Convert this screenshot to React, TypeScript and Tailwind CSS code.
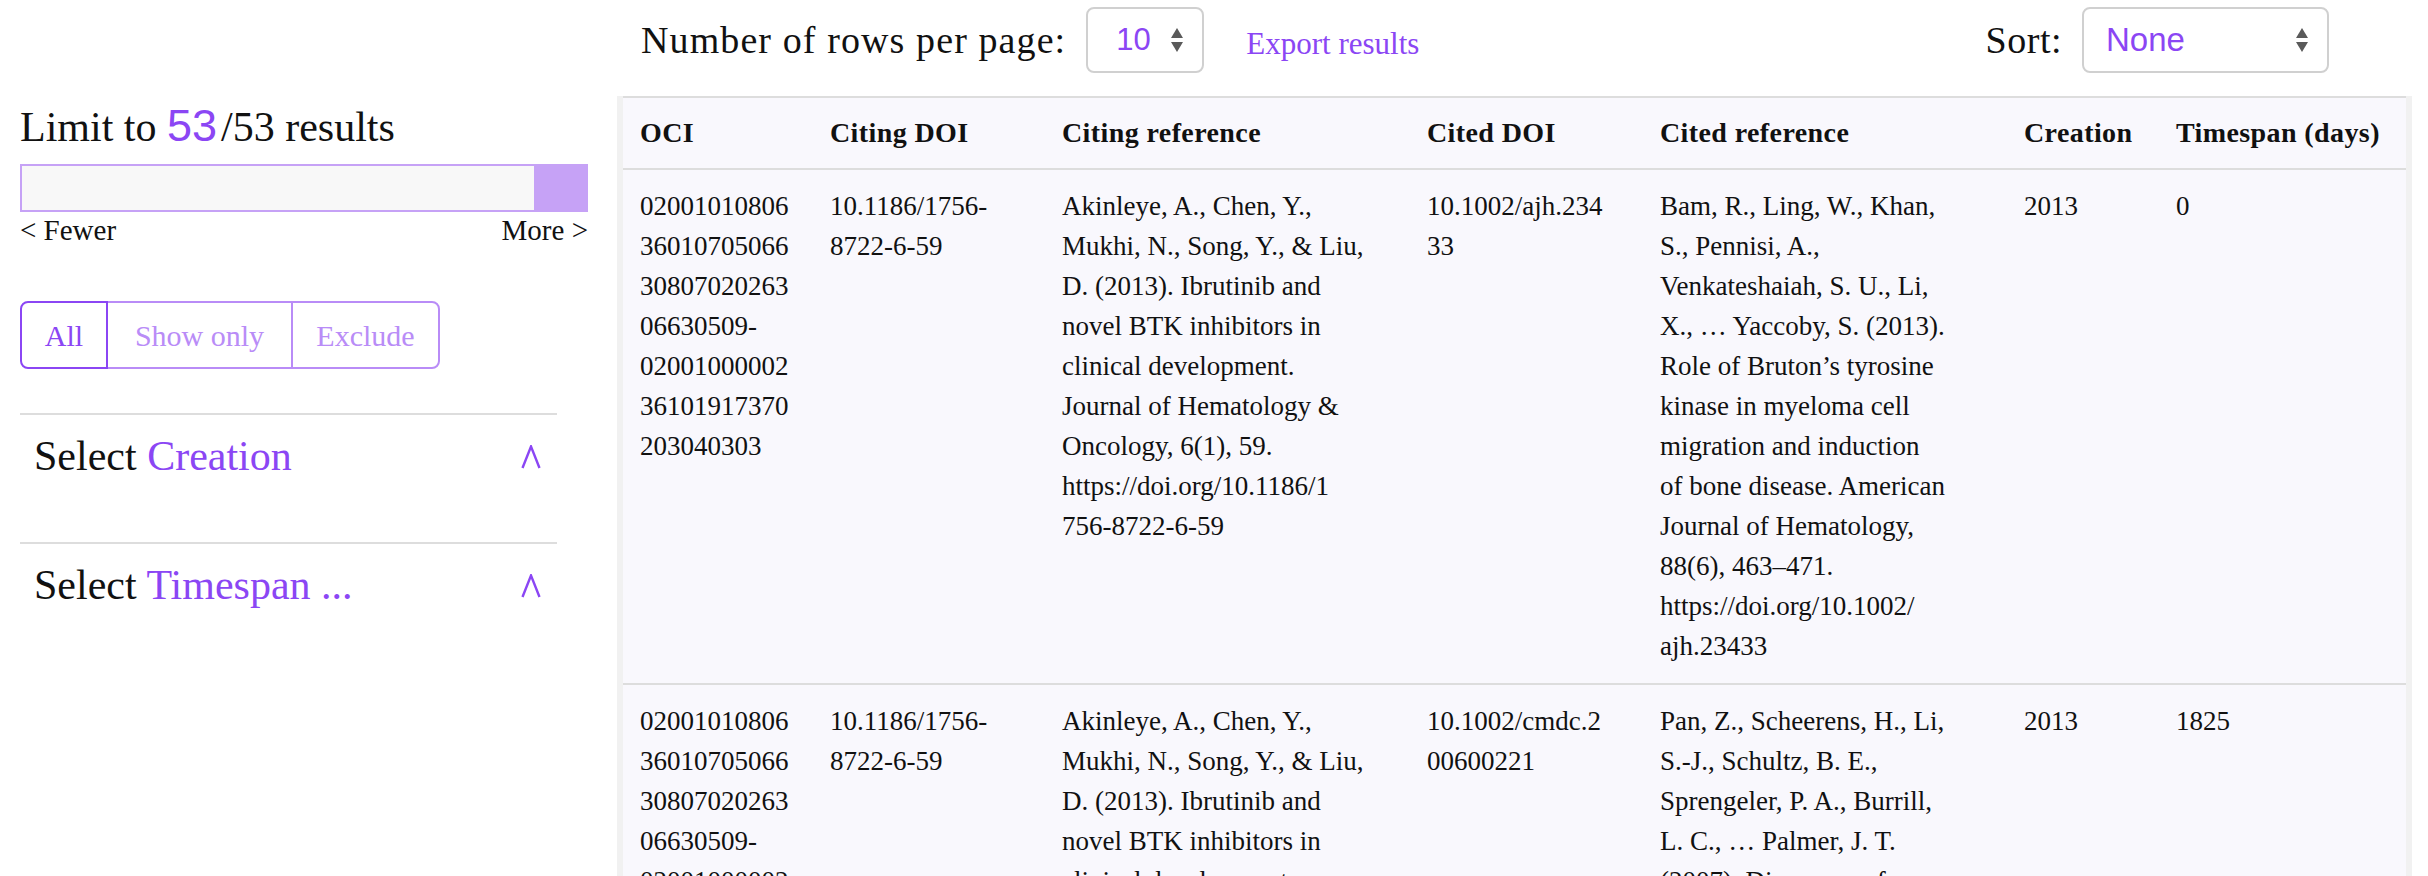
import { useState } from 'react';

const serif = "font-['Liberation_Serif',serif]";

type Row = {
  oci: string[];
  citingDoi: string[];
  citingRef: string[];
  citedDoi: string[];
  citedRef: string[];
  creation: string;
  timespan: string;
};

const ociLines = ['02001010806', '36010705066', '30807020263', '06630509-', '02001000002', '36101917370', '203040303'];
const citingRef = [
  'Akinleye, A., Chen, Y.,',
  'Mukhi, N., Song, Y., & Liu,',
  'D. (2013). Ibrutinib and',
  'novel BTK inhibitors in',
  'clinical development.',
  'Journal of Hematology &',
  'Oncology, 6(1), 59.',
  'https://doi.org/10.1186/1',
  '756-8722-6-59',
];

const rows: Row[] = [
  {
    oci: ociLines,
    citingDoi: ['10.1186/1756-', '8722-6-59'],
    citingRef,
    citedDoi: ['10.1002/ajh.234', '33'],
    citedRef: [
      'Bam, R., Ling, W., Khan,',
      'S., Pennisi, A.,',
      'Venkateshaiah, S. U., Li,',
      'X., … Yaccoby, S. (2013).',
      'Role of Bruton’s tyrosine',
      'kinase in myeloma cell',
      'migration and induction',
      'of bone disease. American',
      'Journal of Hematology,',
      '88(6), 463–471.',
      'https://doi.org/10.1002/',
      'ajh.23433',
    ],
    creation: '2013',
    timespan: '0',
  },
  {
    oci: ociLines,
    citingDoi: ['10.1186/1756-', '8722-6-59'],
    citingRef,
    citedDoi: ['10.1002/cmdc.2', '00600221'],
    citedRef: [
      'Pan, Z., Scheerens, H., Li,',
      'S.-J., Schultz, B. E.,',
      'Sprengeler, P. A., Burrill,',
      'L. C., … Palmer, J. T.',
      '(2007). Discovery of',
      'selective irreversible',
      'inhibitors for Bruton’s',
      'tyrosine kinase.',
      'ChemMedChem, 2(1),',
      '58–61.',
    ],
    creation: '2013',
    timespan: '1825',
  },
];

const cols = 'grid grid-cols-[190px_232px_365px_233px_364px_152px_247px]';

function Lines({ lines }: { lines: string[] }) {
  return (
    <div>
      {lines.map((l, i) => (
        <div key={i} className="whitespace-nowrap">{l}</div>
      ))}
    </div>
  );
}

function Arrows() {
  return (
    <svg width="14" height="28" viewBox="0 0 14 28" className="text-[#5a5a5a]">
      <path d="M7 2 L13 12 L1 12 Z" fill="currentColor" />
      <path d="M1 16 L13 16 L7 26 Z" fill="currentColor" />
    </svg>
  );
}

function Caret() {
  return (
    <svg width="20" height="24" viewBox="0 0 20 24" className="mt-[13px] text-[#8b46f4]">
      <path d="M1.5 23 L10 1.5 L18.5 23" fill="none" stroke="currentColor" strokeWidth="2.4" />
    </svg>
  );
}

function Section({ value }: { value: string }) {
  return (
    <div className="border-t-2 border-[#dddddd] w-[537px] h-[129px] pt-[17px] pl-[14px] pr-[16px] flex items-start justify-between">
      <div className="text-[42px] leading-[48px] text-[#111] whitespace-nowrap">
        Select <span className="text-[#8b46f4]">{value}</span>
      </div>
      <Caret />
    </div>
  );
}

export default function App() {
  const [mode, setMode] = useState('All');
  const modes = ['All', 'Show only', 'Exclude'];
  return (
    <div className={`${serif} h-[876px] w-[2428px] overflow-hidden bg-white text-[#111] flex items-start`}>
      {/* sidebar */}
      <aside className="w-[617px] shrink-0 pl-5 pt-[100px]">
        <div className="text-[42px] leading-[52px] whitespace-nowrap">
          Limit to{' '}
          <span className="font-['Liberation_Sans',sans-serif] text-[45px] text-[#8b46f4]">53</span>
          <span className="ml-1">/53 results</span>
        </div>
        <div className="mt-[11px] w-[568px] h-[48px] border-2 border-[#c6a2f6] bg-[#f8f8f8] flex justify-end">
          <div className="w-[52px] bg-[#c6a2f6]" />
        </div>
        <div className="w-[568px] flex justify-between text-[29px] leading-[36px]">
          <span>&lt; Fewer</span>
          <span>More &gt;</span>
        </div>
        <div className="mt-[53px] flex w-[420px] h-[68px] text-[30px]">
          {modes.map((m, i) => (
            <button
              key={m}
              onClick={() => setMode(m)}
              className={
                'flex items-center justify-center ' +
                (i === 0
                  ? 'w-[88px] rounded-l-lg border-2 border-[#8b46f4] text-[#8b46f4]'
                  : i === 1
                    ? 'w-[183px] border-y-2 border-[#b98cf7] text-[#b98cf7]'
                    : 'w-[149px] rounded-r-lg border-2 border-[#b98cf7] text-[#b98cf7]')
              }
            >
              {m}
            </button>
          ))}
        </div>
        <div className="mt-[44px]">
          <Section value="Creation" />
          <Section value="Timespan ..." />
        </div>
      </aside>

      {/* main */}
      <main className="w-[1795px] shrink-0 flex flex-col">
        <div className="shrink-0 pt-[7px] h-[96px] flex items-start">
          <div className="flex items-center h-[66px] pl-[24px]">
            <span className="text-[38px] tracking-[1.1px] whitespace-nowrap">Number of rows per page:</span>
            <div className="ml-[20px] w-[118px] h-[66px] rounded-lg border-2 border-[#d0d0d0] flex items-center justify-between pl-[28px] pr-[18px]">
              <span className="font-['Liberation_Sans',sans-serif] text-[31px] text-[#8b46f4]">10</span>
              <Arrows />
            </div>
            <span className="ml-[42px] text-[31px] text-[#8b46f4] mt-[8px] whitespace-nowrap">Export results</span>
          </div>
          <div className="flex-1" />
          <div className="flex items-center h-[66px] mr-[83px]">
            <span className="text-[38px] tracking-[0.5px]">Sort:</span>
            <div className="ml-[20px] w-[247px] h-[66px] rounded-lg border-2 border-[#d0d0d0] flex items-center justify-between pl-[22px] pr-[18px]">
              <span className="font-['Liberation_Sans',sans-serif] text-[33px] text-[#8b46f4]">None</span>
              <Arrows />
            </div>
          </div>
        </div>

        <div className="border-x-[6px] border-[#f1f1f1] bg-[#f9f8fd]">
          <div className="border-t-2 border-[#dddddd]" />
          <div className={`${cols} h-[72px] items-center font-bold text-[28px] tracking-[0.4px] border-b-2 border-[#dddddd]`}>
            {['OCI', 'Citing DOI', 'Citing reference', 'Cited DOI', 'Cited reference', 'Creation', 'Timespan (days)'].map(h => (
              <div key={h} className="pl-[17px] whitespace-nowrap">{h}</div>
            ))}
          </div>
          {rows.map((r, i) => (
            <div key={i} className={`${cols} text-[27px] leading-[40px] pt-[16px] pb-[17px] border-b-2 border-[#dddddd]`}>
              <div className="pl-[17px]"><Lines lines={r.oci} /></div>
              <div className="pl-[17px]"><Lines lines={r.citingDoi} /></div>
              <div className="pl-[17px]"><Lines lines={r.citingRef} /></div>
              <div className="pl-[17px]"><Lines lines={r.citedDoi} /></div>
              <div className="pl-[17px]"><Lines lines={r.citedRef} /></div>
              <div className="pl-[17px]">{r.creation}</div>
              <div className="pl-[17px]">{r.timespan}</div>
            </div>
          ))}
        </div>
      </main>
    </div>
  );
}
